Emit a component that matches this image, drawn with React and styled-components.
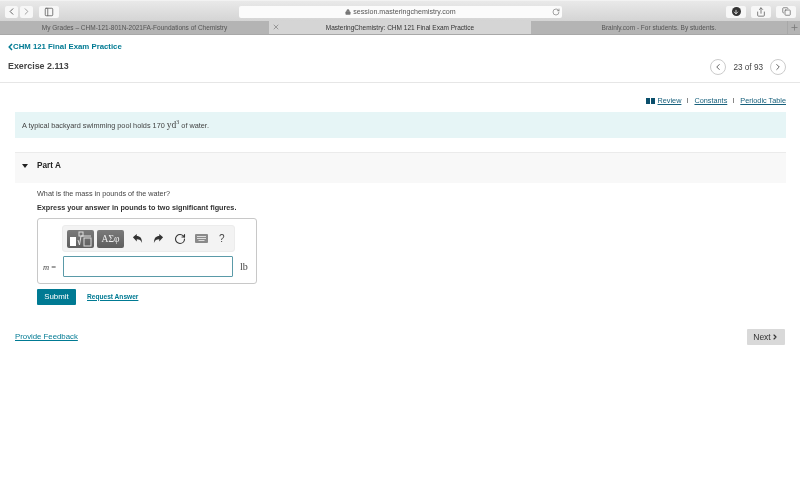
import React from "react";
import styled, { createGlobalStyle } from "styled-components";
import { ChevronLeft, ChevronRight, RotateCw, Lock, Plus, X, Share, Copy, PanelLeft, ArrowDown } from "lucide-react";

const GlobalStyle = createGlobalStyle`
  html, body {
    margin: 0;
    padding: 0;
    background: #fff;
  }
  body {
    font-family: "Liberation Sans", Arial, sans-serif;
    color: #333;
  }
  * { box-sizing: border-box; }
`;

const ArrowGlyph = ({ flip }) => (
  <svg width="11" height="11" viewBox="0 0 12 12" style={flip ? { transform: "scaleX(-1)" } : undefined}>
    <path d="M1 4.6 5.2 1v2.4c3.6 0 5.6 2.2 5.8 7.4-1.2-3-2.8-4-5.8-4v2.6z" fill="#333" />
  </svg>
);

export default function App() {
  return (
    <>
      <GlobalStyle />
      <Page>
        <Toolbar>
          <NavGroup>
            <ChromeButton $w={13}><ChevronLeft size={11} color="#555" /></ChromeButton>
            <ChromeButton $w={13}><ChevronRight size={11} color="#999" /></ChromeButton>
          </NavGroup>
          <ChromeButton $w={20}><PanelLeft size={10} color="#666" /></ChromeButton>
          <AddressBar>
            <AddressText><Lock size={6} color="#777" fill="#777" />session.masteringchemistry.com</AddressText>
            <Reload><RotateCw size={8} color="#777" /></Reload>
          </AddressBar>
          <ChromeActions>
            <ChromeButton $w={20}><DownloadDot><ArrowDown size={6} color="#fff" strokeWidth={3} /></DownloadDot></ChromeButton>
            <ChromeButton $w={20}><Share size={10} color="#666" /></ChromeButton>
            <ChromeButton $w={20}><Copy size={9} color="#666" /></ChromeButton>
          </ChromeActions>
        </Toolbar>
        <TabBar>
          <Tab $w={269}>My Grades – CHM-121-801N-2021FA-Foundations of Chemistry</Tab>
          <Tab $w={262} $active>
            <TabClose><X size={8} color="#777" /></TabClose>
            MasteringChemistry: CHM 121 Final Exam Practice
          </Tab>
          <Tab $w={256}>Brainly.com - For students. By students.</Tab>
          <NewTab><Plus size={9} color="#777" /></NewTab>
        </TabBar>

        <Header>
          <HeaderLeft>
            <BackLink>
              <svg width="5" height="8" viewBox="0 0 5 8"><path d="M4 1 1.2 4 4 7" fill="none" stroke="#007a93" strokeWidth="1.5" /></svg>
              CHM 121 Final Exam Practice
            </BackLink>
            <Title>Exercise 2.113</Title>
          </HeaderLeft>
          <Pager>
            <RoundButton><ChevronLeft size={10} color="#444" /></RoundButton>
            <PagerText>23 of 93</PagerText>
            <RoundButton><ChevronRight size={10} color="#444" /></RoundButton>
          </Pager>
        </Header>

        <Content>
          <Resources>
            <BookIcon viewBox="0 0 9 6" width="9" height="6">
              <rect x="0" y="0" width="4" height="6" fill="#0b4f6c" />
              <rect x="5" y="0" width="4" height="6" fill="#0b4f6c" />
            </BookIcon>
            <ResourceLink>Review</ResourceLink>
            <Divider />
            <ResourceLink>Constants</ResourceLink>
            <Divider />
            <ResourceLink>Periodic Table</ResourceLink>
          </Resources>

          <Intro>
            A typical backyard swimming pool holds 170&nbsp;<MathText>yd<sup>3</sup></MathText>&nbsp;of water.
          </Intro>

          <PartHeader>
            <Caret />
            Part A
          </PartHeader>

          <PartBody>
            <Question>What is the mass in pounds of the water?</Question>
            <Instruction>Express your answer in pounds to two significant figures.</Instruction>

            <AnswerBox>
              <MathToolbar>
                <TemplateButton>
                  <svg width="24" height="16" viewBox="0 0 24 16">
                    <rect x="1" y="6" width="6" height="9" fill="#fff" />
                    <rect x="10" y="1" width="4" height="4" fill="none" stroke="#ddd" />
                    <path d="M9 9l1.5 5L12 5h10" fill="none" stroke="#ddd" />
                    <rect x="15" y="7" width="7" height="8" fill="none" stroke="#ddd" />
                  </svg>
                </TemplateButton>
                <TemplateButton>ΑΣφ</TemplateButton>
                <ToolIcon $ml={3}><ArrowGlyph /></ToolIcon>
                <ToolIcon $ml={7}><ArrowGlyph flip /></ToolIcon>
                <ToolIcon $ml={8}><RotateCw size={12} color="#333" strokeWidth={2.2} /></ToolIcon>
                <ToolIcon $ml={7}>
                  <svg width="13" height="9" viewBox="0 0 13 9">
                    <rect width="13" height="9" rx="1" fill="#8a8a8a" />
                    <rect x="2" y="2" width="9" height="1" fill="#ddd" />
                    <rect x="2" y="4" width="9" height="1" fill="#ddd" />
                    <rect x="3.5" y="6" width="6" height="1" fill="#ddd" />
                  </svg>
                </ToolIcon>
                <HelpMark>?</HelpMark>
              </MathToolbar>
              <AnswerRow>
                <Variable><i>m</i> =</Variable>
                <AnswerInput readOnly />
                <Unit>lb</Unit>
              </AnswerRow>
            </AnswerBox>

            <Actions>
              <SubmitButton>Submit</SubmitButton>
              <RequestLink>Request Answer</RequestLink>
            </Actions>
          </PartBody>

          <Footer>
            <FeedbackLink>Provide Feedback</FeedbackLink>
            <NextButton>Next<ChevronRight size={8} color="#333" strokeWidth={3.5} /></NextButton>
          </Footer>
        </Content>
      </Page>
    </>
  );
}

const Page = styled.div`
  width: 800px;
  height: 500px;
  overflow: hidden;
  background: #fff;
  filter: blur(0.3px);
`;

const Toolbar = styled.div`
  height: 21px;
  display: flex;
  align-items: center;
  gap: 6px;
  padding: 1px 4px 0 5px;
  background: linear-gradient(#e9e9e9, #d4d4d4);
  border-top: 1px solid #f2f2f2;
`;

const NavGroup = styled.div`
  display: flex;
  gap: 2px;
`;

const ChromeButton = styled.div`
  width: ${(p) => p.$w}px;
  height: 12px;
  display: flex;
  align-items: center;
  justify-content: center;
  background: #f7f7f7;
  border-radius: 2px;
`;

const AddressBar = styled.div`
  width: 323px;
  height: 12px;
  margin-left: 174px;
  position: relative;
  display: flex;
  align-items: center;
  justify-content: center;
  background: #fbfbfb;
  border-radius: 2px;
`;

const AddressText = styled.span`
  display: flex;
  align-items: center;
  gap: 2px;
  font-size: 7.1px;
  color: #555;
`;

const Reload = styled.span`
  position: absolute;
  right: 2px;
  top: 2px;
  display: flex;
`;

const ChromeActions = styled.div`
  margin-left: auto;
  display: flex;
  gap: 5px;
`;

const DownloadDot = styled.span`
  width: 9px;
  height: 9px;
  border-radius: 50%;
  background: #333;
  display: flex;
  align-items: center;
  justify-content: center;
`;

const TabBar = styled.div`
  height: 14px;
  display: flex;
  background: #b4b4b4;
  border-bottom: 1px solid #a8a8a8;
`;

const Tab = styled.div`
  width: ${(p) => p.$w}px;
  position: relative;
  display: flex;
  align-items: center;
  justify-content: center;
  font-size: 6.5px;
  color: ${(p) => (p.$active ? "#333" : "#555")};
  background: ${(p) => (p.$active ? "#d5d5d5" : "#b4b4b4")};
`;

const TabClose = styled.span`
  position: absolute;
  left: 3px;
  top: 2px;
  display: flex;
`;

const NewTab = styled.div`
  flex: 1;
  display: flex;
  align-items: center;
  justify-content: center;
  border-left: 1px solid #a8a8a8;
`;

const Header = styled.div`
  height: 48px;
  display: flex;
  justify-content: space-between;
  padding: 6px 14px 0 8px;
  border-bottom: 1px solid #e6e6e6;
`;

const HeaderLeft = styled.div`
  display: flex;
  flex-direction: column;
  gap: 7px;
`;

const BackLink = styled.a`
  display: flex;
  align-items: center;
  gap: 0;
  font-size: 7.8px;
  font-weight: 700;
  line-height: 12px;
  color: #007a93;
`;

const Title = styled.h1`
  margin: 0;
  font-size: 8.9px;
  font-weight: 700;
  line-height: 12px;
  color: #444;
`;

const Pager = styled.div`
  display: flex;
  align-items: center;
  gap: 7px;
  height: 16px;
  margin-top: 18px;
`;

const RoundButton = styled.div`
  width: 16px;
  height: 16px;
  display: flex;
  align-items: center;
  justify-content: center;
  border: 1px solid #ccc;
  border-radius: 50%;
`;

const PagerText = styled.span`
  font-size: 8.2px;
  color: #444;
`;

const Content = styled.div`
  padding: 0 14px 0 15px;
`;

const Resources = styled.div`
  height: 29px;
  display: flex;
  align-items: center;
  justify-content: flex-end;
  padding-top: 6px;
  font-size: 7.3px;
`;

const BookIcon = styled.svg`
  margin-right: 3px;
`;

const ResourceLink = styled.a`
  color: #17607c;
  text-decoration: underline;
`;

const Divider = styled.span`
  width: 1px;
  height: 5px;
  margin: 0 6px;
  background: #888;
`;

const Intro = styled.div`
  height: 26px;
  display: flex;
  align-items: center;
  padding-left: 7px;
  background: #e6f5f6;
  font-size: 7.3px;
  color: #444;
`;

const MathText = styled.span`
  font-family: "Liberation Serif", serif;
  font-size: 9.5px;

  sup {
    font-size: 6px;
    line-height: 0;
  }
`;

const PartHeader = styled.div`
  height: 31px;
  margin-top: 14px;
  display: flex;
  align-items: center;
  gap: 9px;
  padding: 0 0 5px 7px;
  background: #f8f8f8;
  border-top: 1px solid #ebebeb;
  font-size: 8.2px;
  font-weight: 700;
  color: #222;
`;

const Caret = styled.span`
  width: 0;
  height: 0;
  border-left: 3.5px solid transparent;
  border-right: 3.5px solid transparent;
  border-top: 4px solid #222;
`;

const PartBody = styled.div`
  padding: 6px 0 0 22px;
`;

const Question = styled.div`
  font-size: 7.25px;
  line-height: 10px;
  color: #444;
`;

const Instruction = styled.div`
  margin-top: 4px;
  font-size: 7.25px;
  font-weight: 700;
  line-height: 10px;
  color: #333;
`;

const AnswerBox = styled.div`
  width: 220px;
  height: 66px;
  margin-top: 5px;
  padding: 6px 0 0 4px;
  border: 1px solid #c8c8c8;
  border-radius: 3px;
`;

const MathToolbar = styled.div`
  width: 173px;
  height: 27px;
  margin-left: 20px;
  display: flex;
  align-items: center;
  padding-left: 4px;
  background: #f3f3f3;
  border: 1px solid #ececec;
  border-radius: 3px;
`;

const TemplateButton = styled.div`
  width: 27px;
  height: 18px;
  margin-right: 3px;
  display: flex;
  align-items: center;
  justify-content: center;
  background: linear-gradient(#7a7a7a, #5f5f5f);
  border-radius: 2px;
  color: #eee;
  font-family: "Liberation Serif", serif;
  font-size: 9.5px;
`;

const ToolIcon = styled.span`
  display: flex;
  width: 14px;
  justify-content: center;
  margin-left: ${(p) => p.$ml}px;
`;

const HelpMark = styled.span`
  margin-left: 11px;
  font-size: 10px;
  color: #444;
`;

const AnswerRow = styled.div`
  margin-top: 4px;
  display: flex;
  align-items: center;
`;

const Variable = styled.span`
  width: 21px;
  padding-left: 1px;
  font-family: "Liberation Serif", serif;
  font-size: 8.5px;
  color: #444;
`;

const AnswerInput = styled.input`
  width: 170px;
  height: 21px;
  padding: 0;
  background: #fff;
  border: 1px solid #5a9aa8;
  border-radius: 1px;
  outline: none;
`;

const Unit = styled.span`
  margin-left: 7px;
  font-family: "Liberation Serif", serif;
  font-size: 10px;
  color: #444;
`;

const Actions = styled.div`
  margin-top: 5px;
  display: flex;
  align-items: center;
  gap: 11px;
`;

const SubmitButton = styled.button`
  width: 39px;
  height: 16px;
  padding: 0 0 1px;
  background: #007a93;
  border: 0;
  border-radius: 1px;
  color: #fff;
  font-family: inherit;
  font-size: 7.9px;
`;

const RequestLink = styled.a`
  margin-top: -2px;
  font-size: 6.6px;
  font-weight: 700;
  color: #007a93;
  text-decoration: underline;
`;

const Footer = styled.div`
  margin-top: 24px;
  display: flex;
  justify-content: space-between;
  align-items: center;
`;

const FeedbackLink = styled.a`
  margin-top: -2px;
  font-size: 7.8px;
  color: #007a93;
  text-decoration: underline;
`;

const NextButton = styled.div`
  width: 38px;
  height: 16px;
  margin-right: 1px;
  display: flex;
  align-items: center;
  justify-content: center;
  background: #d9d9d9;
  border-radius: 1px;
  font-size: 8.5px;
  color: #333;
`;
